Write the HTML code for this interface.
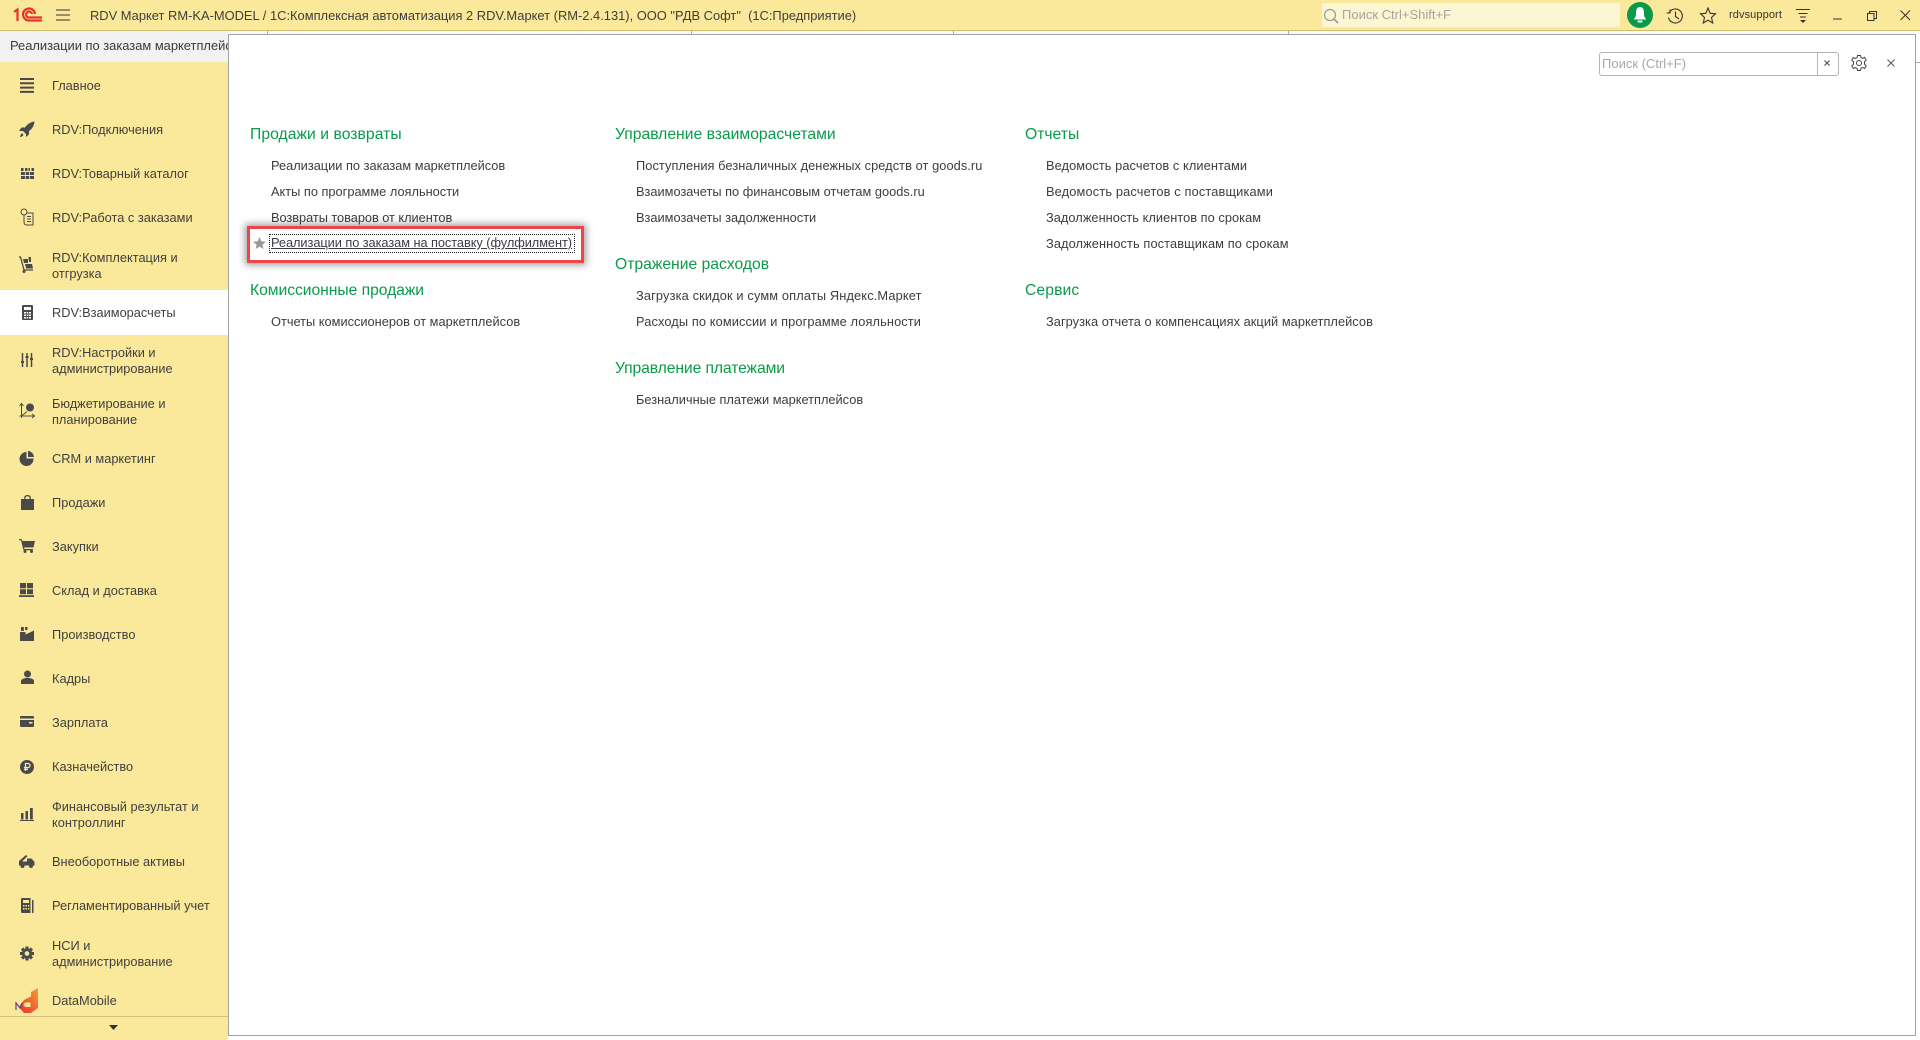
<!DOCTYPE html>
<html lang="ru"><head><meta charset="utf-8"><title>RDV Маркет</title>
<style>
html,body{margin:0;padding:0;width:1920px;height:1040px;overflow:hidden;background:#fff}
body{position:relative;font-family:"Liberation Sans",Arial,sans-serif;font-size:13px;color:#3a3a3a}
.a{position:absolute;white-space:nowrap}
.s{position:absolute;left:52px;line-height:16px;white-space:nowrap;color:#3f3f3f;font-size:12.8px}
.h{position:absolute;white-space:nowrap;color:#0a9b4a;font-size:15.7px;line-height:20px}
.l{position:absolute;white-space:nowrap;color:#3c3c44;font-size:12.8px;line-height:16px}
svg{position:absolute;overflow:visible}
.i{fill:#4a4a4a;stroke:none}
</style></head><body>
<!-- title bar -->
<div class="a" style="left:0;top:0;width:1920px;height:30px;background:#fbe99b;border-bottom:1px solid #cfc06f"></div>
<svg style="left:13px;top:7px" width="30" height="16" viewBox="0 0 30 16"><g fill="none" stroke="#e8312f" stroke-width="2.2"><path d="M1 5 L4.5 2.5 V14"/><path d="M22 7 A6 6 0 1 0 16 13.5 H29"/><path d="M19 7 A3 3 0 1 0 16 10.5 H29"/></g></svg>
<svg style="left:56px;top:9px" width="15" height="12"><path d="M0 1H14M0 6H14M0 11H14" stroke="#333" stroke-width="1" fill="none"/></svg>
<div class="a" style="left:90px;top:8px;line-height:16px;color:#3d3d3d;font-size:12.9px;white-space:pre">RDV Маркет RM-KA-MODEL / 1С:Комплексная автоматизация 2 RDV.Маркет (RM-2.4.131), ООО "РДВ Софт"  (1С:Предприятие)</div>
<div class="a" style="left:1322px;top:3px;width:298px;height:24px;background:#fdf6d2;border-radius:2px"></div>
<svg style="left:1323px;top:8px" width="16" height="16"><circle cx="7" cy="7" r="5.5" fill="none" stroke="#999" stroke-width="1.2"/><path d="M11 11L15 15" stroke="#999" stroke-width="1.6"/></svg>
<div class="a" style="left:1342px;top:7px;line-height:16px;color:#a5a5a0">Поиск Ctrl+Shift+F</div>
<svg style="left:1627px;top:2px" width="26" height="26"><circle cx="13" cy="13" r="13" fill="#0a9a4c"/><path d="M13 5C9.500 5 9 8.500 9 12C9 15 7.500 16 7 17.500H19C18.500 16 17 15 17 12C17 8.500 16.500 5 13 5Z" fill="#fff"/><rect x="10.500" y="18.500" width="5" height="2" rx="1" fill="#fff"/></svg>
<svg style="left:1666px;top:8px" width="18" height="16" fill="none" stroke="#333" stroke-width="1.100"><path d="M3 5A7 7 0 1 1 2.500 9.500"/><path d="M.5 5H4V1.500" stroke-width="1"/><path d="M9.500 3.500V8.500L13 11"/></svg>
<svg style="left:1700px;top:7px" width="16" height="17" fill="none" stroke="#333" stroke-width="1.100"><path d="M8 1L10.200 6.300L15.500 6.800L11.500 10.500L12.700 16L8 13.100L3.300 16L4.500 10.500L.5 6.800L5.800 6.300Z"/></svg>
<div class="a" style="left:1729px;top:8px;line-height:15px;font-size:11px;color:#333;letter-spacing:.1px">rdvsupport</div>
<svg style="left:1796px;top:9px" width="16" height="15"><path d="M0 .5H14M2.500 4.500H11.500M4 8H10" stroke="#333" fill="none"/><path d="M4 11H10L7 14Z" fill="#333"/></svg>
<svg style="left:1833px;top:18px" width="9" height="2"><path d="M0 1H9" stroke="#333" stroke-width="1"/></svg>
<svg style="left:1867px;top:11px" width="10" height="10" fill="none" stroke="#333"><path d="M.5 2.500H7V9.500H.5Z"/><path d="M2.500 2V.5H9.500V7.500H7.500"/></svg>
<svg style="left:1900px;top:10px" width="11" height="11"><path d="M.5 .5L10 10M10 .5L.5 10" stroke="#333" stroke-width="1" fill="none"/></svg>

<!-- tab strip -->
<div class="a" style="left:0;top:31px;width:228px;height:31px;background:#f2f2f2;border-bottom:1px solid #aaa"></div>
<div class="a" style="left:10px;top:38px;line-height:16px;width:218px;overflow:hidden;color:#3a3a3a;font-size:12.9px">Реализации по заказам маркетплейсов</div>
<div class="a" style="left:228px;top:31px;width:1692px;height:4px;background:#fafafa"></div>
<div class="a" style="left:267px;top:31px;width:1px;height:4px;background:#aaa"></div>
<div class="a" style="left:691px;top:31px;width:1px;height:4px;background:#aaa"></div>
<div class="a" style="left:953px;top:31px;width:1px;height:4px;background:#aaa"></div>
<div class="a" style="left:1288px;top:31px;width:1px;height:4px;background:#aaa"></div>

<!-- sidebar -->
<div class="a" style="left:0;top:62px;width:228px;height:978px;background:#fbe99b"></div>
<div class="a" style="left:0;top:290px;width:228px;height:45px;background:#fff"></div>
<div class="a" style="left:0;top:1016px;width:228px;height:1px;background:#cdbf7c"></div>
<svg style="left:109px;top:1025px" width="10" height="6"><path d="M0 0H9L4.500 5Z" fill="#333"/></svg>

<!-- main panel -->
<div class="a" style="left:228px;top:34px;width:1686px;height:1000px;background:#fff;border:1px solid #a3a3a3;box-sizing:content-box"></div>
<div class="a" style="left:1916px;top:35px;width:4px;height:1005px;background:#fff"></div>
<div class="a" style="left:1916px;top:62px;width:4px;height:1px;background:#aaa"></div>

<!-- sidebar labels -->
<div class="s" style="top:78px">Главное</div>
<div class="s" style="top:122px">RDV:Подключения</div>
<div class="s" style="top:166px">RDV:Товарный каталог</div>
<div class="s" style="top:210px">RDV:Работа с заказами</div>
<div class="s" style="top:250px">RDV:Комплектация и<br>отгрузка</div>
<div class="s" style="top:305px">RDV:Взаиморасчеты</div>
<div class="s" style="top:345px">RDV:Настройки и<br>администрирование</div>
<div class="s" style="top:396px">Бюджетирование и<br>планирование</div>
<div class="s" style="top:451px">CRM и маркетинг</div>
<div class="s" style="top:495px">Продажи</div>
<div class="s" style="top:539px">Закупки</div>
<div class="s" style="top:583px">Склад и доставка</div>
<div class="s" style="top:627px">Производство</div>
<div class="s" style="top:671px">Кадры</div>
<div class="s" style="top:715px">Зарплата</div>
<div class="s" style="top:759px">Казначейство</div>
<div class="s" style="top:799px">Финансовый результат и<br>контроллинг</div>
<div class="s" style="top:854px">Внеоборотные активы</div>
<div class="s" style="top:898px">Регламентированный учет</div>
<div class="s" style="top:938px">НСИ и<br>администрирование</div>
<div class="s" style="top:993px">DataMobile</div>

<!-- sidebar icons -->
<svg style="left:20px;top:78px" width="14" height="15"><path class="i" d="M0 0H14V2H0ZM0 4.300H14V6.300H0ZM0 8.600H14V10.600H0ZM0 12.900H14V14.900H0Z"/></svg>
<svg style="left:19px;top:121px" width="16" height="16"><path class="i" d="M15.500 .5C11 1 8 3.500 6 6.500H2.500L0 10H4L7 13V16L10 13.500V10C13 8 15 5 15.500 .5ZM3 12C2 13 1 15 1 16C2.500 16 4 15 4.500 14Z"/></svg>
<svg style="left:21px;top:168px" width="13" height="11"><path class="i" d="M0 0H2.500V3H0ZM4 0H6.500V3H4ZM7.500 0H9V3H7.500ZM10.500 0H13V3H10.500ZM0 4H13V7H0ZM0 8H13V11H0Z"/><path d="M4.300 4V11M8.600 4V11" stroke="#fbe99b" stroke-width=".8"/></svg>
<svg style="left:20px;top:208px" width="14" height="18" fill="none" stroke="#4a4a4a"><circle cx="4" cy="4" r="3"/><path d="M4 7.500V13.500Q4 17 6.500 17H13V5H7.500M7 8.500H11M7 11H11M7 13.500H11"/></svg>
<svg style="left:18px;top:256px" width="16" height="17"><path d="M1 1L2.500 1L6 14H15" fill="none" stroke="#4a4a4a" stroke-width="1.300"/><path class="i" d="M5 3H10V7H6ZM7 8H14L15 12.500H8.200ZM10.500 1H13V6H11Z"/><circle class="i" cx="6" cy="15.500" r="1.500"/></svg>
<svg style="left:22px;top:305px" width="11" height="15"><path class="i" d="M1 0H10A1 1 0 0 1 11 1V14A1 1 0 0 1 10 15H1A1 1 0 0 1 0 14V1A1 1 0 0 1 1 0ZM2 2V5H9V2ZM2 7V8.500H4V7ZM4.700 7V8.500H6.300V7ZM7 7V8.500H9V7ZM2 9.500V11H4V9.500ZM4.700 9.500V11H6.300V9.500ZM7 9.500V11H9V9.500ZM2 12V13.500H4V12ZM4.700 12V13.500H6.300V12ZM7 12V13.500H9V12Z" fill-rule="evenodd"/></svg>
<svg style="left:21px;top:353px" width="12" height="14"><path d="M1.500 0V14M6 0V14M10.500 0V14" stroke="#4a4a4a" stroke-width="1.500"/><path class="i" d="M0 8H3V10H0ZM4.500 3H7.500V5H4.500ZM9 5H12V7H9Z"/></svg>
<svg style="left:19px;top:403px" width="16" height="16" fill="none" stroke="#4a4a4a"><path d="M2.500 15V1M.5 3L2.500 .5L4.500 3M.5 13H15M13 11L15.500 13L13 15M2.500 13L8 8.500"/><circle cx="11" cy="4.500" r="4" fill="#4a4a4a" stroke="none"/></svg>
<svg style="left:20px;top:451px" width="14" height="14"><path class="i" d="M6.500 1V7.500H13.500A7 7 0 1 1 6.500 1ZM8 0A6.500 6.500 0 0 1 14 6H8Z"/></svg>
<svg style="left:21px;top:495px" width="13" height="15"><path class="i" d="M0 4H3.200V2.500C3.200 -.8 9.800 -.8 9.800 2.500V4H13V15H0ZM4.500 4H8.500V2.800C8.500 .8 4.500 .8 4.500 2.800Z" fill-rule="evenodd"/></svg>
<svg style="left:19px;top:539px" width="16" height="14"><path class="i" d="M0 0H2.500L3.300 2H16L14.500 8.500H5L5.500 10H14V11.300H4.500L2 1.300H0Z"/><circle class="i" cx="6" cy="12.500" r="1.500"/><circle class="i" cx="12.500" cy="12.500" r="1.500"/></svg>
<svg style="left:19px;top:583px" width="15" height="14"><path class="i" d="M1 0H7V5.200H1ZM8 0H14V5.200H8ZM1 6.200H7V11.200H1ZM8 6.200H14V11.200H8ZM0 12.300H15V14H0Z"/></svg>
<svg style="left:20px;top:627px" width="14" height="14"><path class="i" d="M1 0H3.800V4H1ZM5 0H7.500V3H5ZM0 5H5.500V7.500L14 3.500V14H0Z"/></svg>
<svg style="left:21px;top:670px" width="13" height="14"><circle class="i" cx="6.500" cy="4" r="3.500"/><path class="i" d="M0 14V11C0 9 3 8.500 4.500 8H8.500C10 8.500 13 9 13 11V14Z"/></svg>
<svg style="left:20px;top:716px" width="14" height="11"><path class="i" d="M1 0H13A1 1 0 0 1 14 1V2.500H0V1A1 1 0 0 1 1 0ZM0 4H14V10A1 1 0 0 1 13 11H1A1 1 0 0 1 0 10ZM9 6V7.500H12.500V6Z" fill-rule="evenodd"/></svg>
<svg style="left:20px;top:760px" width="14" height="14"><circle class="i" cx="7" cy="7" r="7"/><path d="M5.500 11V3.500H8A2 2 0 0 1 8 7.500H4M4 9.300H8" fill="none" stroke="#fbe99b" stroke-width="1.300"/></svg>
<svg style="left:20px;top:808px" width="14" height="13"><path class="i" d="M1 5H3.500V11.500H1ZM5.500 3H8V11.500H5.500ZM10 0H12.800V11.500H10ZM0 12H14V13H0Z"/></svg>
<svg style="left:19px;top:855px" width="16" height="13"><path class="i" d="M0 6L7 0L8.500 1.300L3 6.500H8V3.500H12.500L15.500 7V10.500H0Z"/><circle class="i" cx="3.500" cy="11" r="2"/><circle class="i" cx="12" cy="11" r="2"/></svg>
<svg style="left:21px;top:898px" width="13" height="15"><path class="i" d="M1 0H9.500V15H1A1 1 0 0 1 0 14V1A1 1 0 0 1 1 0ZM2 2V5H8V2ZM2 7V8.500H3.500V7ZM4.500 7V8.500H6V7ZM7 7V8.500H8.300V7ZM2 10V11.500H3.500V10ZM4.500 10V11.500H6V10ZM7 10V11.500H8.300V10Z" fill-rule="evenodd"/><rect class="i" x="11" y="2" width="1.500" height="13"/></svg>
<svg style="left:20px;top:946px" width="14" height="15" viewBox="-7.500 -7.500 15 15"><g class="i"><rect x="-1.700" y="-7.500" width="3.400" height="15"/><rect x="-1.700" y="-7.500" width="3.400" height="15" transform="rotate(45)"/><rect x="-1.700" y="-7.500" width="3.400" height="15" transform="rotate(90)"/><rect x="-1.700" y="-7.500" width="3.400" height="15" transform="rotate(135)"/></g><circle r="5.500" fill="#4a4a4a"/><circle r="2.500" fill="#fbe99b"/></svg>
<svg style="left:15px;top:987px" width="24" height="26"><defs><linearGradient id="g" x1="0" y1="1" x2="1" y2="0"><stop offset="0" stop-color="#e8302a"/><stop offset="1" stop-color="#f79a3a"/></linearGradient></defs><path d="M23 1V21L16 26H9L4 20L9 13L16 9.500V5Z" fill="url(#g)"/><path d="M10 15.500H15.500V20H10L8.300 17.800Z" fill="#fbe99b"/><path d="M1 23V16L5 21L7 16" fill="none" stroke="#6a3a88" stroke-width="1.200"/></svg>

<!-- content col 1 -->
<div class="h" style="left:250px;top:125px;letter-spacing:.05px">Продажи и возвраты</div>
<div class="l" style="left:271px;top:158px">Реализации по заказам маркетплейсов</div>
<div class="l" style="left:271px;top:184px">Акты по программе лояльности</div>
<div class="l" style="left:271px;top:210px;letter-spacing:-.04px">Возвраты товаров от клиентов</div>
<div class="a" style="left:247px;top:226px;width:337px;height:37px;box-sizing:border-box;border:3px solid #f0444a;box-shadow:0 0 7px 2px rgba(0,0,0,.38);background:#fff"></div>
<svg style="left:253px;top:237px" width="13" height="12"><path d="M6.500 0L8.300 4.300L13 4.700L9.400 7.700L10.500 12L6.500 9.600L2.500 12L3.600 7.700L0 4.700L4.700 4.300Z" fill="#999"/></svg>
<div class="a" style="left:269px;top:234px;width:304px;height:17px;border:1px dotted #222;box-sizing:content-box"></div>
<div class="l" style="left:271px;top:235px;text-decoration:underline;letter-spacing:-.06px">Реализации по заказам на поставку (фулфилмент)</div>
<div class="h" style="left:250px;top:281px;letter-spacing:-.05px">Комиссионные продажи</div>
<div class="l" style="left:271px;top:314px">Отчеты комиссионеров от маркетплейсов</div>

<!-- col 2 -->
<div class="h" style="left:615px;top:125px">Управление взаиморасчетами</div>
<div class="l" style="left:636px;top:158px;letter-spacing:.07px">Поступления безналичных денежных средств от goods.ru</div>
<div class="l" style="left:636px;top:184px">Взаимозачеты по финансовым отчетам goods.ru</div>
<div class="l" style="left:636px;top:210px">Взаимозачеты задолженности</div>
<div class="h" style="left:615px;top:255px">Отражение расходов</div>
<div class="l" style="left:636px;top:288px;letter-spacing:.14px">Загрузка скидок и сумм оплаты Яндекс.Маркет</div>
<div class="l" style="left:636px;top:314px;letter-spacing:.11px">Расходы по комиссии и программе лояльности</div>
<div class="h" style="left:615px;top:359px;letter-spacing:-.1px">Управление платежами</div>
<div class="l" style="left:636px;top:392px">Безналичные платежи маркетплейсов</div>

<!-- col 3 -->
<div class="h" style="left:1025px;top:125px">Отчеты</div>
<div class="l" style="left:1046px;top:158px;letter-spacing:.08px">Ведомость расчетов с клиентами</div>
<div class="l" style="left:1046px;top:184px;letter-spacing:.15px">Ведомость расчетов с поставщиками</div>
<div class="l" style="left:1046px;top:210px;letter-spacing:.04px">Задолженность клиентов по срокам</div>
<div class="l" style="left:1046px;top:236px;letter-spacing:.1px">Задолженность поставщикам по срокам</div>
<div class="h" style="left:1025px;top:281px;letter-spacing:.1px">Сервис</div>
<div class="l" style="left:1046px;top:314px;letter-spacing:.05px">Загрузка отчета о компенсациях акций маркетплейсов</div>

<!-- form search -->
<div class="a" style="left:1599px;top:52px;box-sizing:content-box;border:1px solid #b5b5b5;border-radius:3px;width:238px;height:22px"></div>
<div class="a" style="left:1817px;top:52px;width:1px;height:24px;background:#b5b5b5"></div>
<div class="a" style="left:1602px;top:56px;line-height:16px;color:#a8a8a8">Поиск (Ctrl+F)</div>
<svg style="left:1824px;top:60px" width="6" height="6"><path d="M.5 .5L5.500 5.500M5.500 .5L.5 5.500" stroke="#555" stroke-width="1.200"/></svg>
<svg style="left:1851px;top:55px" width="16" height="16" viewBox="-8 -8 16 16" fill="none" stroke="#444"><circle r="2.500"/><path d="M-1.500 -7.500H1.500L2 -5.300L3.700 -4.600L5.500 -5.700L5.700 -5.500L7.200 -2.800L5.500 -1.300V1.300L7.200 2.800L5.700 5.500L3.700 4.600L2 5.300L1.500 7.500H-1.500L-2 5.300L-3.700 4.600L-5.700 5.500L-7.200 2.800L-5.500 1.300V-1.300L-7.200 -2.800L-5.700 -5.500L-3.700 -4.600L-2 -5.300Z"/></svg>
<svg style="left:1887px;top:59px" width="8" height="8"><path d="M.5 .5L7.500 7.500M7.500 .5L.5 7.500" stroke="#555" stroke-width="1"/></svg>
</body></html>
